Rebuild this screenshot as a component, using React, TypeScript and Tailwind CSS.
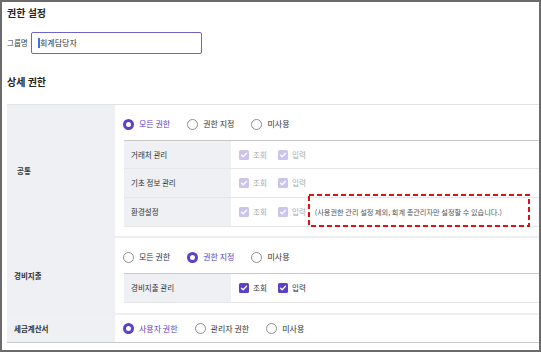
import React from "react";

function Radio({ checked, label }: { checked?: boolean; label: string }) {
  return (
    <div className="flex items-center gap-[5px]">
      {checked ? (
        <span className="w-[11px] h-[11px] rounded-full border-[3.5px] border-[#5c40c9] bg-white box-border" />
      ) : (
        <span className="w-[11px] h-[11px] rounded-full border border-[#8f8f8f] bg-white box-border" />
      )}
      <span className={checked ? "text-[#5c40c9]" : "text-[#333333]"}>{label}</span>
    </div>
  );
}

function Check({ disabled, label }: { disabled?: boolean; label: string }) {
  return (
    <div className="flex items-center gap-[4px]">
      <span
        className={
          "w-[10px] h-[10px] rounded-[1.5px] flex items-center justify-center " +
          (disabled ? "bg-[#cdc4ee]" : "bg-[#5c40c9]")
        }
      >
        <svg width="8" height="8" viewBox="0 0 8 8">
          <path d="M1.5 4.2 L3.2 5.8 L6.5 2.3" fill="none" stroke="white" strokeWidth="1.3" strokeLinecap="round" strokeLinejoin="round" />
        </svg>
      </span>
      <span className={disabled ? "text-[#aaaaaa]" : "text-[#333333]"}>{label}</span>
    </div>
  );
}

function SubRow({
  label,
  disabled,
  h,
  note,
}: {
  label: string;
  disabled?: boolean;
  h: string;
  note?: string;
}) {
  return (
    <div className={"flex border-b border-[#e6e6e6] " + h}>
      <div className="w-[107px] shrink-0 bg-[#eef0f3] flex items-center pl-[7px] text-[7.5px] text-[#333333]">
        {label}
      </div>
      <div className="flex items-center pl-[8px] text-[7.5px]">
        <div className="w-[39px]">
          <Check disabled={disabled} label="조회" />
        </div>
        <Check disabled={disabled} label="입력" />
        {note && <span className="ml-[9px] text-[7.2px] text-[#555555] whitespace-nowrap">{note}</span>}
      </div>
    </div>
  );
}

export default function App() {
  return (
    <div
      className="w-[541px] h-[353px] bg-white"
      style={{ fontFamily: '"Noto Sans CJK KR", "Noto Sans", sans-serif' }}
    >
      <div className="relative w-[541px] h-[352px] border-2 border-[#6b6b6b] overflow-hidden bg-white">
        <div className="pl-[5px] h-[20px] flex items-center text-[10px] font-bold text-[#222222]">권한 설정</div>
        <div className="mt-[10px] h-[22px] flex items-center pl-[5px]">
          <span className="text-[7.5px] text-[#444444] w-[24px]">그룹명</span>
          <div className="w-[171px] h-[22px] border border-[#6f63c8] rounded-[2px] flex items-center pl-[6px] text-[8px] text-[#333333]">
            <span className="w-[1.5px] h-[10px] bg-[#3b74e6] mr-[0.5px]" />
            회계담당자
          </div>
        </div>
        <div className="mt-[17px] h-[20px] pl-[5px] flex items-center text-[10px] font-bold text-[#222222]">상세 권한</div>

        <div className="mt-[13px] ml-[5px] border-t border-[#e2e2e2]">
          {/* 공통 */}
          <div className="flex border-b-2 border-[#efefef]">
            <div className="w-[108px] shrink-0 bg-[#eef0f3] flex items-center pl-[10px] text-[7.5px] font-semibold text-[#333333]">
              공통
            </div>
            <div className="flex-1 pb-[9px]">
              <div className="h-[35px] pt-[3px] pl-[8px] flex items-center gap-[17px] text-[8px]">
                <Radio checked label="모든 권한" />
                <Radio label="권한 지정" />
                <Radio label="미사용" />
              </div>
              <div className="ml-[9px] border-t border-[#c9c9c9]">
                <SubRow label="거래처 관리" disabled h="h-[28px]" />
                <SubRow label="기초 정보 관리" disabled h="h-[29px]" />
                <SubRow
                  label="환경설정"
                  disabled
                  h="h-[29px]"
                  note="(사용권한 관리 설정 제외, 회계 총관리자만 설정할 수 있습니다.)"
                />
              </div>
            </div>
          </div>

          {/* 경비지출 */}
          <div className="flex border-b-2 border-[#efefef]">
            <div className="w-[108px] shrink-0 bg-[#eef0f3] flex items-center pl-[7px] text-[7.5px] font-semibold text-[#333333]">
              경비지출
            </div>
            <div className="flex-1 pb-[10px]">
              <div className="h-[35px] pt-[3px] pl-[8px] flex items-center gap-[17px] text-[8px]">
                <Radio label="모든 권한" />
                <Radio checked label="권한 지정" />
                <Radio label="미사용" />
              </div>
              <div className="ml-[9px] border-t border-[#c9c9c9]">
                <SubRow label="경비지출 관리" h="h-[29px]" />
              </div>
            </div>
          </div>

          {/* 세금계산서 */}
          <div className="flex h-[28px] border-b border-[#c8c8c8]">
            <div className="w-[108px] shrink-0 bg-[#eef0f3] flex items-center pl-[7px] text-[7.5px] font-semibold text-[#333333]">
              세금계산서
            </div>
            <div className="flex-1 pl-[8px] flex items-center gap-[17px] text-[8px]">
              <Radio checked label="사용자 권한" />
              <Radio label="관리자 권한" />
              <Radio label="미사용" />
            </div>
          </div>
        </div>

        {/* red dashed annotation */}
        <svg className="absolute left-[306px] top-[192px]" width="222" height="33" viewBox="0 0 222 33">
          <rect x="1" y="1" width="220" height="31" fill="none" stroke="#e01010" strokeWidth="2" strokeDasharray="5 3" />
        </svg>
      </div>
    </div>
  );
}
